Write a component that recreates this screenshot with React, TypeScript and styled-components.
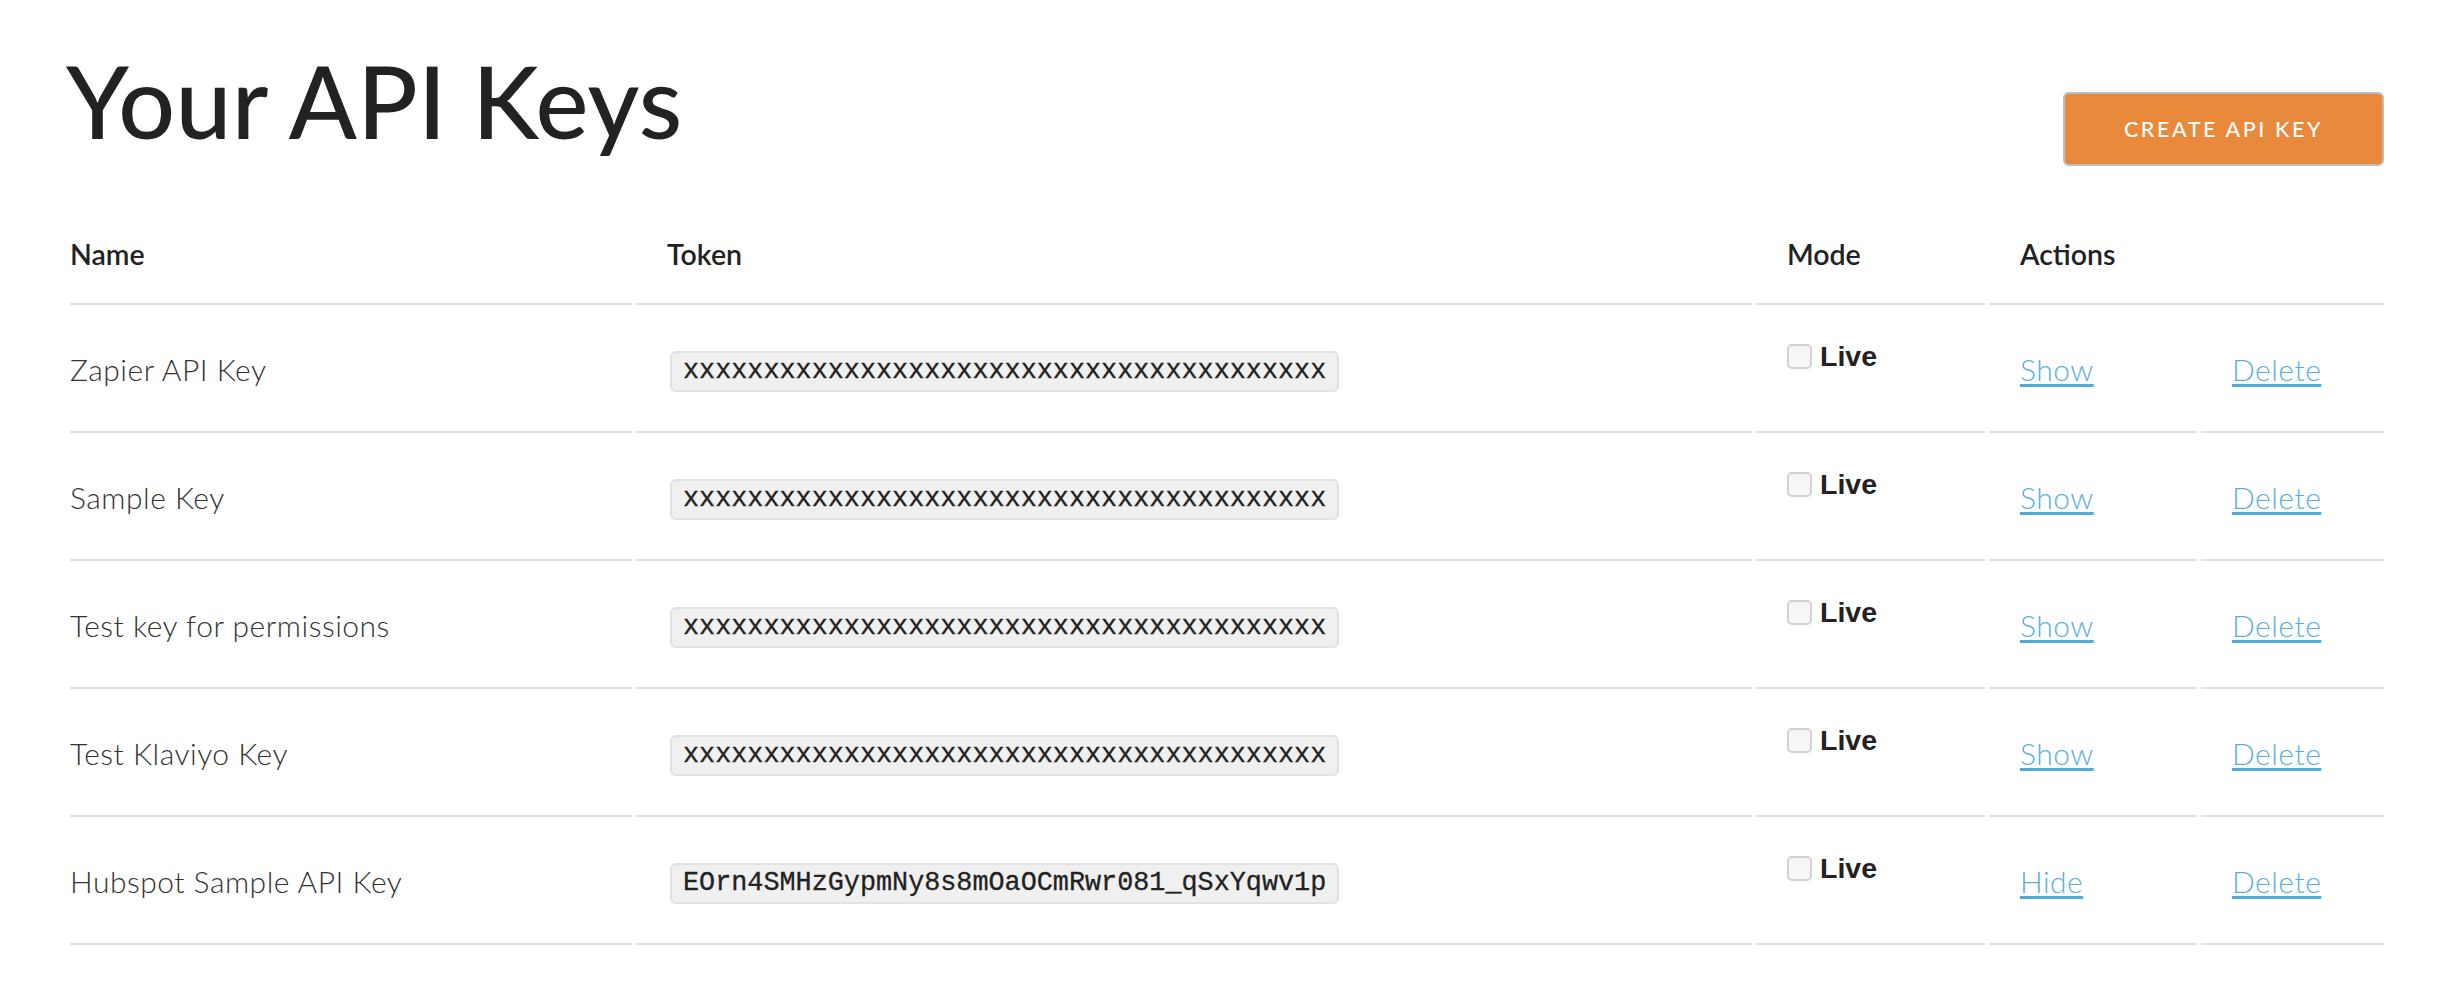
import React from "react";
import styled, { createGlobalStyle } from "styled-components";

const GlobalStyle = createGlobalStyle`
  html, body { margin: 0; padding: 0; background: #ffffff; }
  body { font-family: Lato, "Open Sans", sans-serif; color: #222; }
`;

const Page = styled.div`
  width: 2314px;
  margin-left: 70px;
`;

const Header = styled.header`
  display: flex;
  justify-content: space-between;
  align-items: flex-start;
  height: 166px;
`;

const Title = styled.h1`
  margin: 40px 0 0 -4px;
  font-family: Lato, sans-serif;
  font-weight: 500;
  font-size: 100px;
  line-height: 120px;
  letter-spacing: 0.3px;
  color: #222;
`;

const CreateButton = styled.button`
  margin-top: 92px;
  width: 321px;
  height: 74px;
  background: #e8893b;
  border: 2px solid #bdbdbd;
  border-radius: 6px;
  color: #fff;
  font-family: Lato, sans-serif;
  font-weight: 500;
  font-size: 21.5px;
  letter-spacing: 2.6px;
  text-transform: uppercase;
  cursor: pointer;
`;

const Table = styled.table`
  border-collapse: separate;
  border-spacing: 4px 0;
  table-layout: fixed;
  width: calc(100% + 8px);
  margin: 0 -4px;
`;

const HeadCell = styled.th<{ $first?: boolean }>`
  text-align: left;
  font-family: Lato, sans-serif;
  font-weight: 600;
  font-size: 28.5px;
  line-height: 34px;
  color: #222;
  padding: 71px 0 32px ${(p) => (p.$first ? "0" : "31px")};
  border-bottom: 2px solid #e0e0e0;
`;

const Cell = styled.td<{ $first?: boolean; $top?: boolean }>`
  height: 128px;
  box-sizing: border-box;
  padding: ${(p) => (p.$top ? "36px" : "2px")} 0 0 ${(p) => (p.$first ? "0" : "31px")};
  vertical-align: ${(p) => (p.$top ? "top" : "middle")};
  border-bottom: 2px solid #e0e0e0;
`;

const KeyName = styled.span`
  font-family: Lato, sans-serif;
  font-weight: 300;
  font-size: 30px;
  letter-spacing: 0.5px;
  color: #333;
`;

const TokenPill = styled.code`
  display: inline-block;
  margin: 5px 0 0 3px;
  padding: 0 11px;
  height: 37px;
  line-height: 37px;
  background: #f0f0f0;
  border: 2px solid #e2e2e2;
  border-radius: 6px;
  font-family: "Liberation Mono", "Courier New", monospace;
  font-size: 26.8px;
  color: #222;
  white-space: nowrap;
  -webkit-text-stroke: 0.3px #222;
`;

const ModeLabel = styled.label`
  display: inline-flex;
  align-items: center;
  gap: 8px;
  font-family: "Liberation Sans", Arial, sans-serif;
  font-weight: 700;
  font-size: 28.5px;
  line-height: 30px;
  color: #222;
`;

const Check = styled.input`
  appearance: none;
  margin: 0;
  width: 25px;
  height: 25px;
  box-sizing: border-box;
  border: 2px solid #d2d2d2;
  border-radius: 5px;
  background: #f7f7f7;
`;

const ActionLink = styled.a`
  font-family: Lato, sans-serif;
  font-weight: 300;
  font-size: 30px;
  letter-spacing: 0.5px;
  color: #5aafda;
  text-decoration: underline;
  text-decoration-thickness: 3px;
  text-underline-offset: 3px;
  text-decoration-color: #55a9d6;
  cursor: pointer;
`;

type ApiKey = { name: string; token: string; shown: boolean };

const keys: ApiKey[] = [
  { name: "Zapier API Key", token: "x".repeat(40), shown: false },
  { name: "Sample Key", token: "x".repeat(40), shown: false },
  { name: "Test key for permissions", token: "x".repeat(40), shown: false },
  { name: "Test Klaviyo Key", token: "x".repeat(40), shown: false },
  { name: "Hubspot Sample API Key", token: "EOrn4SMHzGypmNy8s8mOaOCmRwr081_qSxYqwv1p", shown: true },
];

export default function App() {
  return (
    <>
      <GlobalStyle />
      <Page>
        <Header>
          <Title>Your API Keys</Title>
          <CreateButton>Create API Key</CreateButton>
        </Header>
        <Table>
          <colgroup>
            <col style={{ width: 562 }} />
            <col style={{ width: 1116 }} />
            <col style={{ width: 229 }} />
            <col style={{ width: 208 }} />
            <col style={{ width: 183 }} />
          </colgroup>
          <thead>
            <tr>
              <HeadCell $first>Name</HeadCell>
              <HeadCell>Token</HeadCell>
              <HeadCell>Mode</HeadCell>
              <HeadCell colSpan={2}>Actions</HeadCell>
            </tr>
          </thead>
          <tbody>
            {keys.map((k) => (
              <tr key={k.name}>
                <Cell $first>
                  <KeyName>{k.name}</KeyName>
                </Cell>
                <Cell>
                  <TokenPill>{k.token}</TokenPill>
                </Cell>
                <Cell $top>
                  <ModeLabel>
                    <Check type="checkbox" />
                    Live
                  </ModeLabel>
                </Cell>
                <Cell>
                  <ActionLink>{k.shown ? "Hide" : "Show"}</ActionLink>
                </Cell>
                <Cell>
                  <ActionLink>Delete</ActionLink>
                </Cell>
              </tr>
            ))}
          </tbody>
        </Table>
      </Page>
    </>
  );
}
